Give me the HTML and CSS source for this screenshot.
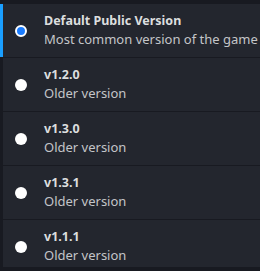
FILE: index.html
```html
<!DOCTYPE html>
<html lang="en">
<head>
    <meta charset="UTF-8">
    <title>Versions</title>
    <link rel="stylesheet" href="styles.css">
</head>
<body>
    <div class="version-list">
        <label class="version selected">
            <span class="radio"></span>
            <span class="info">
                <span class="name">Default Public Version</span>
                <span class="desc">Most common version of the game</span>
            </span>
        </label>
        <label class="version">
            <span class="radio"></span>
            <span class="info">
                <span class="name">v1.2.0</span>
                <span class="desc">Older version</span>
            </span>
        </label>
        <label class="version">
            <span class="radio"></span>
            <span class="info">
                <span class="name">v1.3.0</span>
                <span class="desc">Older version</span>
            </span>
        </label>
        <label class="version">
            <span class="radio"></span>
            <span class="info">
                <span class="name">v1.3.1</span>
                <span class="desc">Older version</span>
            </span>
        </label>
        <label class="version">
            <span class="radio"></span>
            <span class="info">
                <span class="name">v1.1.1</span>
                <span class="desc">Older version</span>
            </span>
        </label>
    </div>
</body>
</html>
```

FILE: styles.css
```css
body {
    margin: 0;
    background-color: #181a21;
    font-family: "Noto Sans", "Open Sans", sans-serif;
}

.version-list {
    display: flex;
    flex-direction: column;
    gap: 1px;
    padding-top: 4px;
    height: 263px;
    overflow: hidden;
}

.version {
    display: flex;
    flex-shrink: 0;
    align-items: center;
    height: 53px;
    background-color: #23262e;
    border-left: 3px solid #181a21;
}

.version.selected {
    border-left-color: #1a9fff;
}

.radio {
    width: 12px;
    height: 12px;
    border-radius: 50%;
    background-color: #ffffff;
    margin: 0 17px 0 12px;
    box-sizing: border-box;
}

.selected .radio {
    background-color: #1a7cff;
    border: 2px solid #ffffff;
}

.info {
    display: flex;
    flex-direction: column;
    padding-bottom: 2px;
}

.name {
    font-size: 12.5px;
    font-weight: bold;
    color: #dcdedf;
    line-height: 18px;
}

.desc {
    font-size: 13px;
    color: #c3c5c8;
    line-height: 18px;
}
```
